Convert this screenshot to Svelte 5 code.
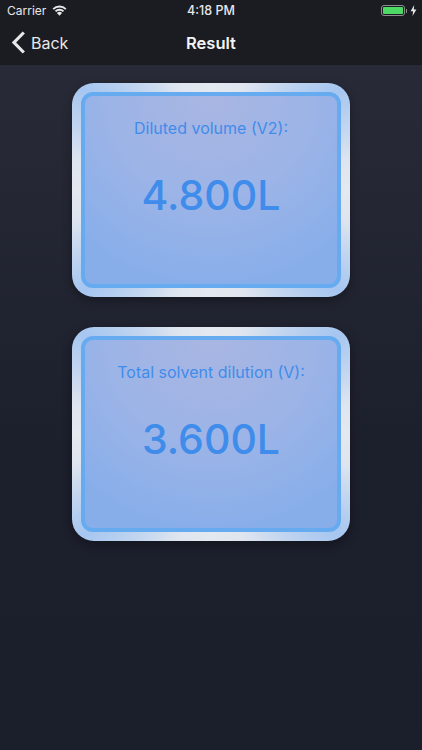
<script>
    const results = [
        { label: "Diluted volume (V2):", value: "4.800L" },
        { label: "Total solvent dilution (V):", value: "3.600L" },
    ];
</script>

<div class="screen">
    <header>
        <div class="status">
            <div class="carrier">
                <span>Carrier</span>
                <svg class="wifi" width="15" height="11" viewBox="0 0 15 11">
                    <path d="M1.200 4.100a9 9 0 0 1 12.600 0" fill="none" stroke="#e8e8ea" stroke-width="1.900" />
                    <path d="M3.500 6.400a5.700 5.700 0 0 1 8 0" fill="none" stroke="#e8e8ea" stroke-width="1.900" />
                    <path d="M7.500 10.800L4.900 8.100a3.700 3.700 0 0 1 5.200 0z" fill="#e8e8ea" />
                </svg>
            </div>
            <span class="time">4:18 PM</span>
            <div class="power">
                <div class="battery"><div class="charge"></div></div>
                <div class="nub"></div>
                <svg width="7" height="11" viewBox="0 0 7 11">
                    <path d="M4.200 0L.6 6.200h2.500L2.500 11l3.900-6.500H3.800z" fill="#e8e8ea" />
                </svg>
            </div>
        </div>
        <nav>
            <div class="back">
                <svg width="15" height="23" viewBox="0 0 15 23">
                    <path d="M12.800 1.500L3 11.500l9.800 10" fill="none" stroke="#e8e8ea" stroke-width="3.200" />
                </svg>
                <span>Back</span>
            </div>
            <span class="title">Result</span>
        </nav>
    </header>

    <main>
        {#each results as result}
            <section class="card">
                <div class="inner">
                    <p class="label">{result.label}</p>
                    <p class="value">{result.value}</p>
                </div>
            </section>
        {/each}
    </main>
</div>

<style>
    :global(body) {
        margin: 0;
        background: #1c1f2b;
    }
    .screen {
        width: 422px;
        height: 750px;
        overflow: hidden;
        display: flex;
        flex-direction: column;
        font-family: Inter, "Liberation Sans", sans-serif;
        background: linear-gradient(180deg, #2a2d39 0%, #1c1f2c 60%, #1b1e2b 100%);
    }
    header {
        height: 65px;
        flex: none;
        background: #1b1c22;
        color: #e8e8ea;
    }
    .status {
        height: 21px;
        position: relative;
        display: flex;
        align-items: center;
        justify-content: space-between;
        padding: 0 5px 0 7px;
        font-size: 12px;
    }
    .carrier {
        display: flex;
        align-items: center;
        gap: 6px;
    }
    .wifi {
        margin-top: -1px;
    }
    .time {
        position: absolute;
        left: 0;
        right: 0;
        text-align: center;
        font-size: 12.500px;
        font-weight: 500;
    }
    .power {
        display: flex;
        align-items: center;
        gap: 1px;
    }
    .battery {
        box-sizing: border-box;
        width: 24px;
        height: 11px;
        border: 1px solid #8a8c8e;
        border-radius: 3px;
        padding: 1px;
        display: flex;
    }
    .charge {
        flex: 1;
        background: #4cd964;
        border-radius: 1px;
    }
    .nub {
        width: 1.500px;
        height: 4px;
        background: #8a8c8e;
        margin-right: 2px;
    }
    nav {
        height: 44px;
        position: relative;
        display: flex;
        align-items: center;
        justify-content: center;
    }
    .back {
        position: absolute;
        left: 11px;
        top: 10px;
        display: flex;
        align-items: center;
        gap: 5px;
        font-size: 16px;
    }
    .title {
        font-size: 16.500px;
        font-weight: 600;
        color: #f4f4f5;
    }
    main {
        display: flex;
        flex-direction: column;
        align-items: center;
        gap: 30px;
        padding-top: 18px;
    }
    .card {
        box-sizing: border-box;
        width: 278px;
        height: 214px;
        padding: 9px;
        border-radius: 22px;
        background: conic-gradient(
            #e4e8ef 0deg,
            #dfe5ef 18deg,
            #a6c6f0 52deg,
            #dfe5ef 78deg,
            #e4e8ef 90deg,
            #dfe5ef 102deg,
            #a6c6f0 128deg,
            #dfe5ef 162deg,
            #e4e8ef 180deg,
            #dfe5ef 198deg,
            #a6c6f0 232deg,
            #dfe5ef 258deg,
            #e4e8ef 270deg,
            #dfe5ef 282deg,
            #a6c6f0 308deg,
            #dfe5ef 342deg,
            #e4e8ef 360deg
        );
        box-shadow: 0 3px 10px rgba(0, 0, 0, 0.35);
    }
    .inner {
        box-sizing: border-box;
        height: 100%;
        border: 4px solid #66aaf0;
        border-radius: 12px;
        background: radial-gradient(ellipse 190px 190px at 50% 0%, #a9b6e2 0%, #9cb4e7 55%, #88aeea 100%);
        color: #3f8ceb;
        text-align: center;
    }
    p {
        margin: 0;
    }
    .label {
        font-size: 16px;
        line-height: 20px;
        margin-top: 22px;
    }
    .value {
        font-size: 41px;
        font-weight: 500;
        line-height: 48px;
        margin-top: 33px;
    }
</style>
